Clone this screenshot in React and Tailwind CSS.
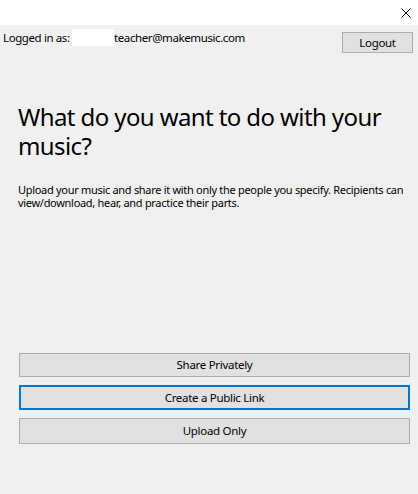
export default function App() {
  const font = { fontFamily: '"Noto Sans", "Open Sans", sans-serif' };
  return (
    <div
      className="flex h-[494px] w-[418px] flex-col bg-[#f0f0f0] text-black"
      style={font}
    >
      {/* title bar */}
      <div className="flex h-[25px] items-center justify-end bg-white pr-[7px]">
        <svg width="10" height="10" viewBox="0 0 10 10" className="mt-[1px]">
          <path d="M0.5 0.5 L9.5 9.5 M9.5 0.5 L0.5 9.5" stroke="#000" strokeWidth="1" fill="none" />
        </svg>
      </div>

      {/* account row */}
      <div className="flex h-[28px] items-start justify-between">
        <div className="mt-[4px] flex items-center whitespace-nowrap pl-[3px] text-[11.5px] leading-[17px] tracking-[-0.4px]">
          <span className="w-[69px]">Logged in as:</span>
          <span className="h-[17px] w-[42px] bg-white" />
          <span>teacher@makemusic.com</span>
        </div>
        <button
          type="button"
          className="mr-[5px] mt-[7px] h-[21px] w-[71px] border border-[#adadad] bg-[#e1e1e1] text-[11.5px] leading-[19px] tracking-[-0.3px]"
        >
          Logout
        </button>
      </div>

      {/* content */}
      <div className="px-[18px]">
        <h1 className="mt-[49px] whitespace-nowrap text-[24px] font-normal leading-[29px] tracking-[-0.6px]">
          What do you want to do with your
          <br />
          music?
        </h1>
        <p className="mt-[23px] whitespace-nowrap text-[11px] leading-[13px] tracking-[-0.3px]">
          Upload your music and share it with only the people you specify. Recipients can
          <br />
          view/download, hear, and practice their parts.
        </p>
      </div>

      <div className="flex-1" />

      {/* actions */}
      <div className="mb-[50px] ml-[19px] mr-[8px] flex flex-col gap-[8px] text-[11.5px] tracking-[-0.3px]">
        <button type="button" className="h-[24px] border border-[#adadad] bg-[#e1e1e1]">
          Share Privately
        </button>
        <button type="button" className="h-[25px] border-2 border-[#0078d7] bg-[#e1e1e1]">
          Create a Public Link
        </button>
        <button type="button" className="h-[26px] border border-[#adadad] bg-[#e1e1e1]">
          Upload Only
        </button>
      </div>
    </div>
  );
}
